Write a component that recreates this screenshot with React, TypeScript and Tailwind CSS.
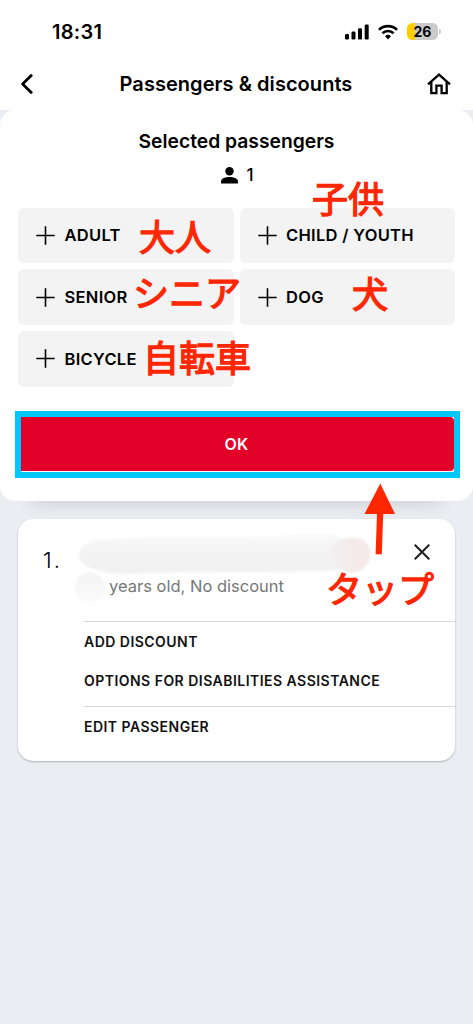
import type { ReactNode } from 'react';
import clsx from 'clsx';

const passengerTypes = ['ADULT', 'CHILD / YOUTH', 'SENIOR', 'DOG', 'BICYCLE'];

const notes = [
  { text: '子供', className: 'left-[312px] top-[179px]' },
  { text: '大人', className: 'left-[139px] top-[217px]' },
  { text: 'シニア', className: 'left-[133px] top-[273px]' },
  { text: '犬', className: 'left-[352px] top-[274px]' },
  { text: '自転車', className: 'left-[143px] top-[338px]' },
  { text: 'タップ', className: 'left-[326px] top-[569px]' },
];

function StatusBar() {
  return (
    <div className="flex h-[62px] items-center justify-between pt-px pr-[32px] pl-[52px]">
      <span className="text-[20px] leading-6 font-semibold tracking-[0.3px]">18:31</span>
      <div className="flex items-center">
        <svg width="24" height="16" viewBox="0 0 24 16">
          <rect x="0" y="10" width="4" height="5.5" rx="1.3" />
          <rect x="6.5" y="7.4" width="4" height="8.1" rx="1.3" />
          <rect x="13" y="4.2" width="4" height="11.3" rx="1.3" />
          <rect x="19.7" y="0.5" width="4" height="15" rx="1.3" />
        </svg>
        <svg className="ml-[9px]" width="20" height="16" viewBox="0 0 20 16" fill="none" stroke="black" strokeWidth="2.7">
          <path d="M1 5.9a12.8 12.8 0 0 1 18 0" />
          <path d="M4.4 9.3a8 8 0 0 1 11.2 0" />
          <path d="M10 15.4l-3-3.1a4.3 4.3 0 0 1 6 0z" fill="black" stroke="none" />
        </svg>
        <div className="ml-[9px] flex h-[17px] w-[31px] items-center justify-center rounded-[5.5px] bg-[linear-gradient(to_right,#ffcc00_8px,#cacaca_8px)]">
          <span className="text-[14px] leading-none font-bold">26</span>
        </div>
        <div className="ml-px h-[5px] w-[2px] rounded-r-full bg-[#cacaca]" />
      </div>
    </div>
  );
}

function Header() {
  return (
    <header className="flex h-12 items-center justify-between pr-[22px] pb-1 pl-[20px]">
      <svg width="14" height="22" viewBox="0 0 14 22" fill="none" stroke="black" strokeWidth="2.8">
        <path d="M12 1.8L2.6 11l9.4 9.2" strokeLinejoin="round" />
      </svg>
      <h1 className="ml-[11px] text-[20px] leading-6 font-[570] tracking-[0.05px]">Passengers & discounts</h1>
      <svg width="24" height="22" viewBox="0 0 24 22" fill="none" stroke="black" strokeWidth="2.3">
        <path d="M1 11.4L12 1.6l11 9.8" />
        <path d="M4.3 9v11.2h5.1v-7.5h5.2v7.5h5.1V9" />
      </svg>
    </header>
  );
}

function PassengerButton({ children }: { children: ReactNode }) {
  return (
    <button className="flex h-[55.5px] items-center gap-[9.5px] rounded-[6px] bg-[#f3f3f3] pl-[18px] text-[16.5px] font-semibold">
      <svg width="19" height="19" viewBox="0 0 19 19" fill="none" stroke="black" strokeWidth="1.6">
        <path d="M9.5 0.3v18.4M0.3 9.5h18.4" />
      </svg>
      <span className="tracking-[0.3px]">{children}</span>
    </button>
  );
}

function SelectionPanel() {
  return (
    <section className="relative h-[391px] rounded-[15px] bg-white px-[18px] pt-[19px]">
      <div className="absolute inset-x-8 bottom-3 -z-10 h-8 shadow-[0_14px_18px_rgba(60,70,70,0.18)]" />
      <h2 className="text-center text-[19.3px] leading-6 font-semibold">Selected passengers</h2>
      <div className="mt-[12px] flex h-5 items-center justify-center gap-[8px] pl-[2px]">
        <svg width="17" height="17" viewBox="0 0 17 17">
          <circle cx="8.5" cy="4.2" r="4.2" />
          <path d="M0 16.6v-2.2C0 11.5 4 10 8.5 10S17 11.5 17 14.4v2.2z" />
        </svg>
        <span className="text-[17px] leading-5 font-medium">1</span>
      </div>
      <div className="mt-[22.6px] grid grid-cols-2 gap-x-[6px] gap-y-[6.3px]">
        {passengerTypes.map((type) => (
          <PassengerButton key={type}>{type}</PassengerButton>
        ))}
      </div>
      <div className="-mr-[5px] -ml-[3px] mt-[24.3px] h-[67px] border-[6px] border-[#00c8ff] bg-white">
        <button className="flex h-[54px] w-full items-center justify-center rounded-r-[4px] bg-[#e20029] pr-[2px] text-[16px] font-semibold tracking-[0.2px] text-white">
          OK
        </button>
      </div>
    </section>
  );
}

function PassengerCard() {
  return (
    <section className="relative mx-[18px] mt-[18px] h-[242px] rounded-[15px] bg-white shadow-[0_1px_2px_rgba(0,0,0,0.25)]">
      <svg className="absolute top-0 left-0" width="437" height="100" viewBox="0 0 437 100">
        <defs>
          <filter id="soft" x="-10%" y="-20%" width="120%" height="140%">
            <feGaussianBlur stdDeviation="1.2" />
          </filter>
          <linearGradient id="smear" x1="0" x2="0" y1="0" y2="1">
            <stop offset="0" stopColor="#fafafa" />
            <stop offset="0.5" stopColor="#f3f3f3" />
            <stop offset="1" stopColor="#f1f1f1" />
          </linearGradient>
          <linearGradient id="dab" x1="0" x2="0" y1="0" y2="1">
            <stop offset="0" stopColor="#f3f3f3" />
            <stop offset="1" stopColor="#fcfcfc" />
          </linearGradient>
          <linearGradient id="blush" x1="0" x2="1" y1="0" y2="0">
            <stop offset="0" stopColor="#f2f0f0" />
            <stop offset="0.5" stopColor="#f4eaea" />
            <stop offset="1" stopColor="#f7e8e8" />
          </linearGradient>
        </defs>
        <g filter="url(#soft)">
          <path d="M61 37C61 26 70 20 86 20C115 18 150 18 200 18C240 19 285 14 314 15C334 20 331 50 318 51C290 53 240 53 200 53C160 52 130 55 105 55C82 54 61 48 61 37Z" fill="url(#smear)" />
          <circle cx="72" cy="69" r="15.5" fill="url(#dab)" />
          <path d="M314 28C318 19 334 17 343 20C354 25 355 39 348 47C341 55 332 55 325 51C315 46 311 38 314 28Z" fill="url(#blush)" />
        </g>
      </svg>
      <div className="relative flex h-[102px] justify-between pr-[25px] pl-[25px]">
        <div className="flex">
          <span className="mt-[27px] w-[66px] text-[22px] leading-7 font-light tracking-[2px]">1.</span>
          <p className="mt-[57px] text-[16.5px] leading-5 text-[#777]">years old, No discount</p>
        </div>
        <svg className="mt-[25px]" width="16" height="16" viewBox="0 0 16 16" fill="none" stroke="#222" strokeWidth="2.1">
          <path d="M0.7 0.7l14.6 14.6M15.3 0.7L0.7 15.3" />
        </svg>
      </div>
      <div className="ml-[66px] flex flex-col text-[14px] leading-5 font-semibold tracking-[0.47px] text-[#111]">
        <div className="flex h-[85px] flex-col gap-[19px] border-t border-[#d6d6d6] pt-[10px]">
          <button className="text-left">ADD DISCOUNT</button>
          <button className="text-left">OPTIONS FOR DISABILITIES ASSISTANCE</button>
        </div>
        <button className="border-t border-[#d6d6d6] pt-[10px] text-left">EDIT PASSENGER</button>
      </div>
    </section>
  );
}

function Notes() {
  return (
    <div className="pointer-events-none absolute inset-0">
      {notes.map(({ text, className }) => (
        <span
          key={text}
          className={clsx(
            "absolute font-['Noto_Sans_CJK_JP',sans-serif] text-[36px] leading-[36px] font-normal whitespace-nowrap text-[#ff2600] [-webkit-text-stroke:1.3px_#ff2600]",
            className,
          )}
        >
          {text}
        </span>
      ))}
      <svg className="absolute top-[482px] left-[363px]" width="34" height="74" viewBox="0 0 34 74" fill="#ff2600">
        <path d="M17.3 1.5L32 32H20.2L18.8 72.3H12.6L14 32H1.5z" />
      </svg>
    </div>
  );
}

export default function App() {
  return (
    <div className="relative isolate h-[1024px] w-[473px] overflow-hidden bg-[#eaedf2] font-['Inter','Noto_Sans_CJK_JP',sans-serif] text-black">
      <div className="bg-white">
        <StatusBar />
        <Header />
      </div>
      <SelectionPanel />
      <PassengerCard />
      <Notes />
    </div>
  );
}
